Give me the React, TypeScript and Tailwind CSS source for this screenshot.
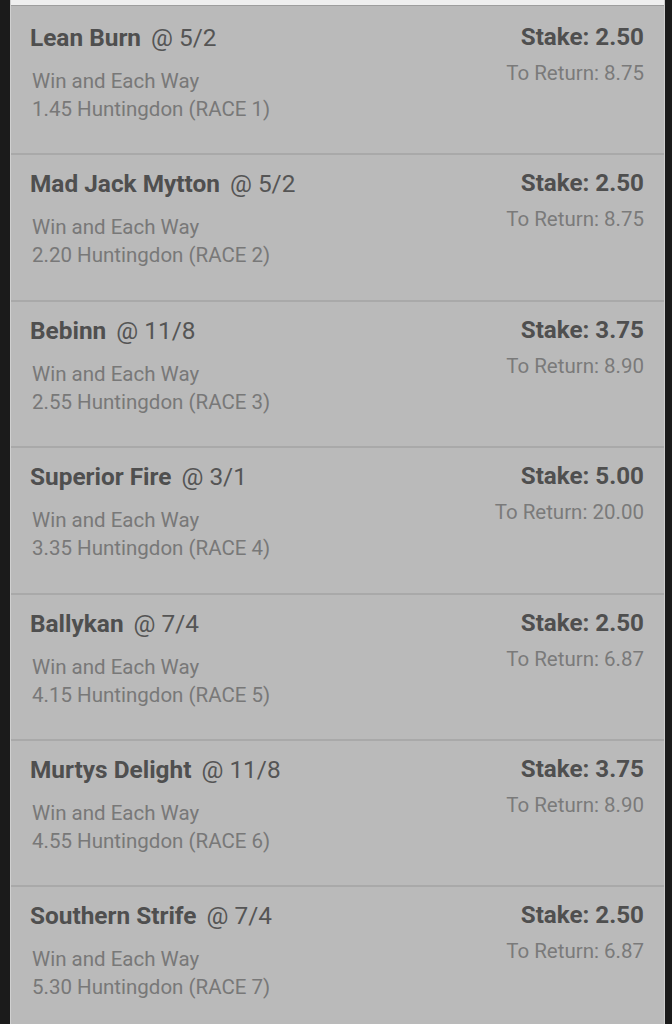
import React from "react";

type Bet = {
  horse: string;
  odds: string;
  time: string;
  race: number;
  stake: string;
  ret: string;
};

const bets: Bet[] = [
  { horse: "Lean Burn", odds: "5/2", time: "1.45", race: 1, stake: "2.50", ret: "8.75" },
  { horse: "Mad Jack Mytton", odds: "5/2", time: "2.20", race: 2, stake: "2.50", ret: "8.75" },
  { horse: "Bebinn", odds: "11/8", time: "2.55", race: 3, stake: "3.75", ret: "8.90" },
  { horse: "Superior Fire", odds: "3/1", time: "3.35", race: 4, stake: "5.00", ret: "20.00" },
  { horse: "Ballykan", odds: "7/4", time: "4.15", race: 5, stake: "2.50", ret: "6.87" },
  { horse: "Murtys Delight", odds: "11/8", time: "4.55", race: 6, stake: "3.75", ret: "8.90" },
  { horse: "Southern Strife", odds: "7/4", time: "5.30", race: 7, stake: "2.50", ret: "6.87" },
];

function BetRow({ bet }: { bet: Bet }) {
  return (
    <div className="flex h-[146.4px] shrink-0 justify-between border-b-2 border-[#a9a9a9] pl-[19px] pr-[20px] pt-[15px]">
      <div className="flex flex-col">
        <div className="flex items-baseline leading-[28px]">
          <span className="text-[24.4px] font-bold text-[#4f4f4f]">{bet.horse}</span>
          <span className="ml-[10px] text-[24.4px] text-[#555555]">@ {bet.odds}</span>
        </div>
        <div className="mt-[15px] pl-[2px] text-[20.5px] leading-[28px] text-[#787878]">
          <div>Win and Each Way</div>
          <div>
            {bet.time} Huntingdon (RACE {bet.race})
          </div>
        </div>
      </div>
      <div className="flex flex-col items-end">
        <div className="-mt-[1px] text-[24.2px] font-bold leading-[28px] text-[#4f4f4f]">Stake: {bet.stake}</div>
        <div className="mt-[8px] text-[20.5px] leading-[28px] text-[#7a7a7a]">To Return: {bet.ret}</div>
      </div>
    </div>
  );
}

export default function App() {
  return (
    <div
      className="flex h-[1024px] w-[672px] overflow-hidden bg-[#1b1b1b]"
      style={{ fontFamily: "Roboto, 'Liberation Sans', sans-serif" }}
    >
      <div className="w-[10px] shrink-0" />
      <div className="flex w-[655px] shrink-0 flex-col border-l border-r border-l-[#d0d0d0] border-r-[#cfcfcf] bg-[#bababa]">
        <div className="box-content h-[5px] shrink-0 border-b border-[#9e9e9e] bg-[#efefef]" />
        <div className="h-[3px] shrink-0" />
        {bets.map((b) => (
          <BetRow key={b.race} bet={b} />
        ))}
      </div>
    </div>
  );
}
